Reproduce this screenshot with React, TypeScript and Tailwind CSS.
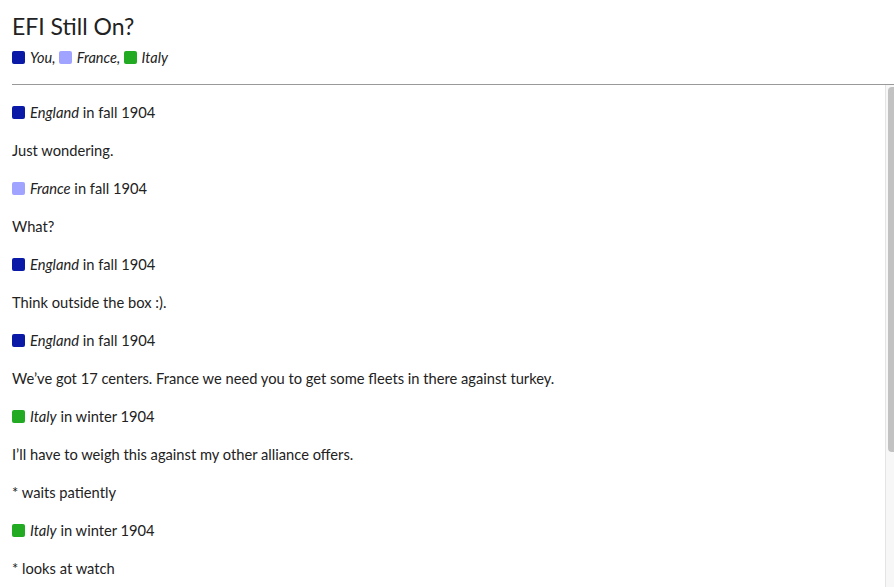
import React from 'react';

type Power = 'England' | 'France' | 'Italy';

// 国家颜色
const powerColors: Record<Power, string> = {
  England: 'bg-[#0a1aa6]',
  France: 'bg-[#a0a3ff]',
  Italy: 'bg-[#22aa22]',
};

type Message = { from: Power; phase: string; lines: string[] };

const messages: Message[] = [
  { from: 'England', phase: 'fall 1904', lines: ['Just wondering.'] },
  { from: 'France', phase: 'fall 1904', lines: ['What?'] },
  { from: 'England', phase: 'fall 1904', lines: ['Think outside the box :).'] },
  {
    from: 'England',
    phase: 'fall 1904',
    lines: ['We\u2019ve got 17 centers. France we need you to get some fleets in there against turkey.'],
  },
  {
    from: 'Italy',
    phase: 'winter 1904',
    lines: ['I\u2019ll have to weigh this against my other alliance offers.', '* waits patiently'],
  },
  { from: 'Italy', phase: 'winter 1904', lines: ['* looks at watch'] },
];

const Swatch = ({ power }: { power: Power }) => (
  <span className={`inline-block w-[13px] h-[13px] rounded-[2px] align-[-1px] mr-[5px] ${powerColors[power]}`} />
);

export default function App() {
  return (
    <div
      className="h-screen flex flex-col bg-white text-[#222]"
      style={{ fontFamily: 'Lato, "Noto Sans", sans-serif' }}
    >
      {/* 标题区域 */}
      <div className="px-3 pt-[11px] pb-[17px]">
        <h1 className="text-[23px] leading-[30px] text-[#222]">EFI Still On?</h1>
        <div className="mt-[8px] text-[14.5px] leading-[18px] italic">
          <Swatch power="England" />You, <Swatch power="France" />France, <Swatch power="Italy" />Italy
        </div>
      </div>
      <div className="ml-3 border-t border-[#999]" />

      {/* 消息列表 */}
      <div className="relative flex-1 min-h-0">
        <div className="h-full overflow-y-auto">
          <div className="px-3 pt-[18px] pb-[200px] flex flex-col gap-[19px] text-[14.7px] leading-[19px]">
            {messages.map((m, i) => (
              <React.Fragment key={i}>
                <div>
                  <Swatch power={m.from} />
                  <i>{m.from}</i> in {m.phase}
                </div>
                {m.lines.map((l, j) => (
                  <div key={j}>{l}</div>
                ))}
              </React.Fragment>
            ))}
          </div>
        </div>
        {/* 滚动条 */}
        <div className="absolute right-0 top-0 bottom-0 w-[9px] bg-[#f7f7f7] border-l border-[#e4e4e4] pl-[2px] pt-[2px]">
          <div className="h-[365px] bg-[#c2c2c2] rounded-l-[4px]" />
        </div>
      </div>
    </div>
  );
}
